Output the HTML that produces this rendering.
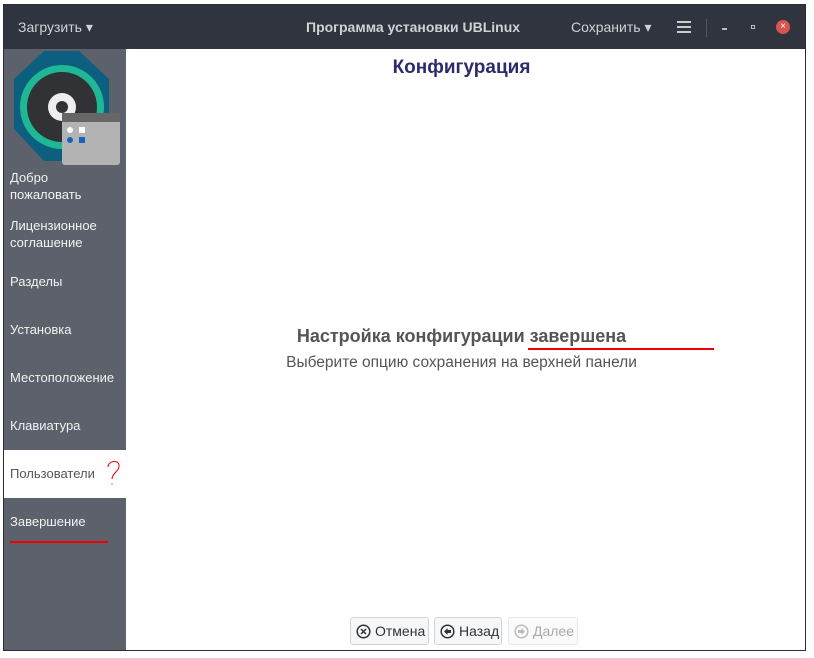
<!DOCTYPE html>
<html><head><meta charset="utf-8"><style>
*{margin:0;padding:0;box-sizing:border-box}
body{width:814px;height:658px;background:#fff;font-family:"Liberation Sans","DejaVu Sans",sans-serif;position:relative;overflow:hidden}
.win{position:absolute;left:3px;top:4px;width:803px;height:647px;border:1px solid #2a2d35;background:#fff}
.hdr{position:absolute;left:0;top:0;width:801px;height:44px;background:#30343f;color:#d0d2d6;font-size:14px}
.hdr span{position:absolute;top:14px}
.side{position:absolute;left:0;top:44px;width:122px;height:601px;background:#5d616b}
.item{position:absolute;left:0;width:122px;color:#f2f2f2;font-size:13px;padding-left:6px;line-height:17px}
.btn{position:absolute;top:612px;height:28px;border:1px solid #cfd3da;border-radius:3px;background:#f6f7f9;font-size:14px;color:#333;line-height:26px;padding-left:24px}
.btn svg{position:absolute;left:5px;top:6px}
.c{position:absolute;left:118px;width:679px;text-align:center}
</style></head><body>
<div class="win">
<div class="hdr">
<span style="left:14px">Загрузить ▾</span>
<span style="left:302px;font-weight:bold;color:#cfd1d5">Программа установки UBLinux</span>
<span style="left:567px">Сохранить ▾</span>
<div style="position:absolute;left:673px;top:16px;width:14px;height:2px;background:#ccc;box-shadow:0 5px 0 #ccc,0 10px 0 #ccc"></div>
<div style="position:absolute;left:702px;top:14px;width:1px;height:18px;background:#555"></div>
<div style="position:absolute;left:718px;top:23px;width:5px;height:2px;background:#bbb"></div>
<div style="position:absolute;left:747px;top:20px;width:4px;height:4px;border:1px solid #bbb"></div>
<div style="position:absolute;left:772px;top:15px;width:14px;height:14px;border-radius:50%;background:#d9534f;color:#fff;font-size:10px;text-align:center;line-height:14px">×</div>
</div>
<div class="side">
<svg width="122" height="118" viewBox="0 0 122 118" style="position:absolute;left:0;top:0">
<polygon points="40,2 75,2 105,30 105,80 75,112 40,112 10,80 10,30" fill="#0d5f80"/>
<circle cx="58" cy="58" r="42" fill="#1fb894"/>
<circle cx="58" cy="58" r="35" fill="#303236"/>
<circle cx="58" cy="58" r="14" fill="#eee"/><circle cx="58" cy="58" r="6" fill="#303236"/>
<rect x="58" y="64" width="58" height="52" rx="3" fill="#b3b3b3"/><rect x="58" y="64" width="58" height="9" fill="#666"/>
<circle cx="66" cy="81" r="3" fill="#fff"/><rect x="75" y="78" width="6" height="6" fill="#fff"/>
<circle cx="66" cy="91" r="3" fill="#1565c0"/><rect x="75" y="88" width="6" height="6" fill="#1565c0"/>
</svg>
<div class="item" style="top:120px">Добро<br>пожаловать</div>
<div class="item" style="top:168px">Лицензионное<br>соглашение</div>
<div class="item" style="top:224px">Разделы</div>
<div class="item" style="top:272px">Установка</div>
<div class="item" style="top:320px">Местоположение</div>
<div class="item" style="top:368px">Клавиатура</div>
<div style="position:absolute;left:0;top:401px;width:122px;height:48px;background:#fff"></div>
<div class="item" style="top:416px;color:#555">Пользователи</div>
<svg style="position:absolute;left:100px;top:410px" width="20" height="28"><path d="M4,8 C4,2 14,0 15,6 C16,12 8,14 8,20" stroke="#e00" fill="none" stroke-width="1"/><circle cx="8" cy="25" r="1" fill="#f99"/></svg>
<div class="item" style="top:464px">Завершение</div>
<div style="position:absolute;left:6px;top:492px;width:98px;height:2px;background:#e00"></div>
</div>
<div class="c" style="top:52px;font-size:19px;font-weight:bold;color:#2d2a6e">Конфигурация</div>
<div class="c" style="top:321px;font-size:18px;font-weight:bold;color:#555">Настройка конфигурации завершена</div>
<div style="position:absolute;left:524px;top:343px;width:186px;height:2px;background:#e00"></div>
<div class="c" style="top:349px;font-size:15.5px;color:#555">Выберите опцию сохранения на верхней панели</div>
<div class="btn" style="left:346px;width:79px"><svg width="15" height="15"><circle cx="7.5" cy="7.5" r="6.3" stroke="#333" stroke-width="1.5" fill="none"/><path d="M5,5 L10,10 M10,5 L5,10" stroke="#333" stroke-width="1.5"/></svg>Отмена</div>
<div class="btn" style="left:430px;width:68px"><svg width="15" height="15"><circle cx="7.5" cy="7.5" r="6.3" stroke="#333" stroke-width="1.5" fill="none"/><path d="M4,7.5 L7.5,4 V6 H11 V9 H7.5 V11 Z" fill="#333"/></svg>Назад</div>
<div class="btn" style="left:504px;width:70px;color:#aaa;border-color:#e6e8ec;background:#fafafa"><svg width="15" height="15"><circle cx="7.5" cy="7.5" r="6.3" stroke="#bbb" stroke-width="1.5" fill="none"/><path d="M11,7.5 L7.5,4 V6 H4 V9 H7.5 V11 Z" fill="#bbb"/></svg>Далее</div>
</div>
</body></html>
